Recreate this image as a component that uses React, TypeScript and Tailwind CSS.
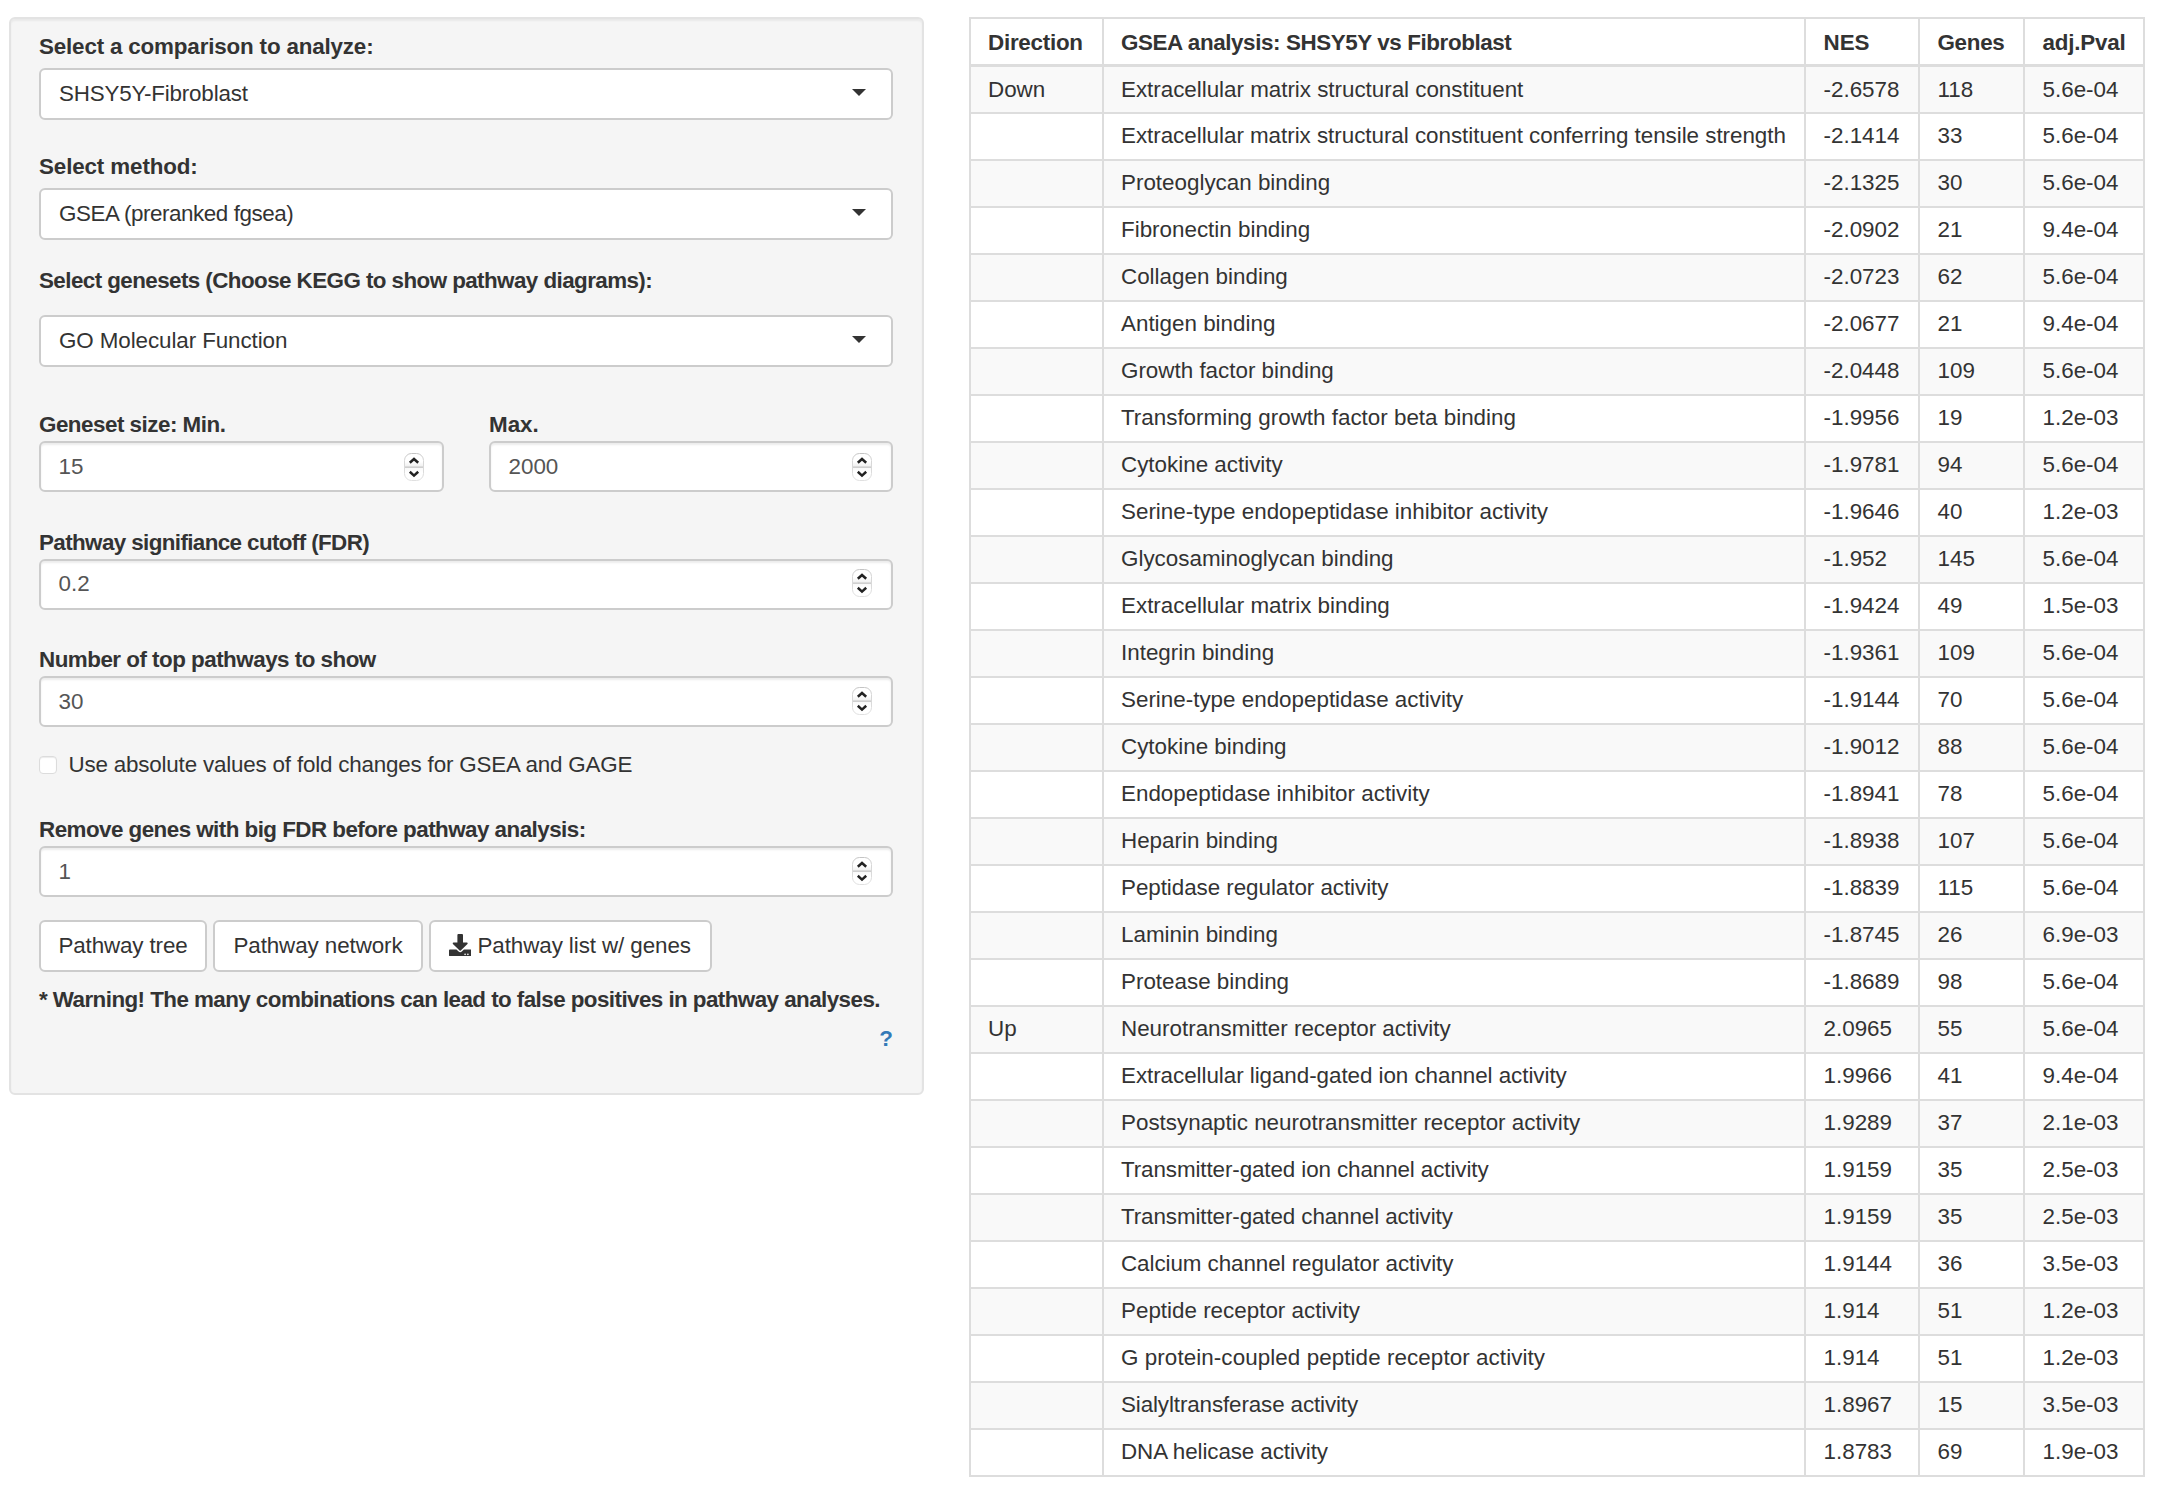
import type { ReactNode } from "react";
import { FaDownload } from "react-icons/fa";

type Row = [direction: string, pathway: string, nes: string, genes: string, pval: string, tracking?: string];

const rows: Row[] = [
  ["Down", "Extracellular matrix structural constituent", "-2.6578", "118", "5.6e-04", "tracking-[-0.02px]"],
  ["", "Extracellular matrix structural constituent conferring tensile strength", "-2.1414", "33", "5.6e-04", "tracking-[-0.03px]"],
  ["", "Proteoglycan binding", "-2.1325", "30", "5.6e-04"],
  ["", "Fibronectin binding", "-2.0902", "21", "9.4e-04"],
  ["", "Collagen binding", "-2.0723", "62", "5.6e-04"],
  ["", "Antigen binding", "-2.0677", "21", "9.4e-04"],
  ["", "Growth factor binding", "-2.0448", "109", "5.6e-04"],
  ["", "Transforming growth factor beta binding", "-1.9956", "19", "1.2e-03"],
  ["", "Cytokine activity", "-1.9781", "94", "5.6e-04"],
  ["", "Serine-type endopeptidase inhibitor activity", "-1.9646", "40", "1.2e-03"],
  ["", "Glycosaminoglycan binding", "-1.952", "145", "5.6e-04"],
  ["", "Extracellular matrix binding", "-1.9424", "49", "1.5e-03"],
  ["", "Integrin binding", "-1.9361", "109", "5.6e-04"],
  ["", "Serine-type endopeptidase activity", "-1.9144", "70", "5.6e-04"],
  ["", "Cytokine binding", "-1.9012", "88", "5.6e-04"],
  ["", "Endopeptidase inhibitor activity", "-1.8941", "78", "5.6e-04"],
  ["", "Heparin binding", "-1.8938", "107", "5.6e-04"],
  ["", "Peptidase regulator activity", "-1.8839", "115", "5.6e-04", "tracking-[-0.05px]"],
  ["", "Laminin binding", "-1.8745", "26", "6.9e-03"],
  ["", "Protease binding", "-1.8689", "98", "5.6e-04"],
  ["Up", "Neurotransmitter receptor activity", "2.0965", "55", "5.6e-04"],
  ["", "Extracellular ligand-gated ion channel activity", "1.9966", "41", "9.4e-04", "tracking-[-0.05px]"],
  ["", "Postsynaptic neurotransmitter receptor activity", "1.9289", "37", "2.1e-03"],
  ["", "Transmitter-gated ion channel activity", "1.9159", "35", "2.5e-03", "tracking-[-0.1px]"],
  ["", "Transmitter-gated channel activity", "1.9159", "35", "2.5e-03", "tracking-[-0.1px]"],
  ["", "Calcium channel regulator activity", "1.9144", "36", "3.5e-03", "tracking-[-0.07px]"],
  ["", "Peptide receptor activity", "1.914", "51", "1.2e-03"],
  ["", "G protein-coupled peptide receptor activity", "1.914", "51", "1.2e-03", "tracking-[0.08px]"],
  ["", "Sialyltransferase activity", "1.8967", "15", "3.5e-03", "tracking-[-0.12px]"],
  ["", "DNA helicase activity", "1.8783", "69", "1.9e-03", "tracking-[-0.1px]"],
];

function Label({ className, children }: { className: string; children: ReactNode }) {
  return <div className={`whitespace-nowrap font-bold leading-[31px] ${className}`}>{children}</div>;
}

function Select({ className, children }: { className: string; children: ReactNode }) {
  return (
    <div className="flex h-[52px] items-start justify-between rounded-[6px] border-2 border-[#ccc] bg-white pl-[18px] pr-[25px] pt-2 leading-[31px]">
      <span className={className}>{children}</span>
      <svg className="mt-[11px]" width="14" height="7" viewBox="0 0 14 7" fill="#333">
        <path d="M0 0h14L7 7z" />
      </svg>
    </div>
  );
}

function Spinner() {
  return (
    <svg width="20" height="28" viewBox="0 0 20 28" fill="none">
      <defs>
        <linearGradient id="stepper" x1="0" y1="0" x2="0" y2="1">
          <stop offset="0" stopColor="#fff" />
          <stop offset="0.3" stopColor="#fff" />
          <stop offset="0.48" stopColor="#f0f0f0" />
          <stop offset="0.52" stopColor="#f8f8f8" />
          <stop offset="0.7" stopColor="#fff" />
        </linearGradient>
        <linearGradient id="stepperEdge" x1="0" y1="0" x2="0" y2="1">
          <stop offset="0" stopColor="#c4c4c4" />
          <stop offset="0.25" stopColor="#d6d6d6" />
          <stop offset="1" stopColor="#e0e0e0" />
        </linearGradient>
      </defs>
      <rect x="0.5" y="0.5" width="19" height="27" rx="7" fill="url(#stepper)" stroke="url(#stepperEdge)" />
      <path d="M1 14.2h18" stroke="#cfcfcf" strokeWidth="1.6" />
      <path d="M5.8 9.8L10 6l4.2 3.8M5.8 18.8l4.2 3.8 4.2-3.8" stroke="#222" strokeWidth="2.5" />
    </svg>
  );
}

function NumberField({ value, textPad = "pt-2", spinPad = "pt-[9px]" }: { value: string; textPad?: string; spinPad?: string }) {
  return (
    <div className="flex h-[51px] items-start justify-between rounded-[6px] border-2 border-[#ccc] bg-white pl-[17.5px] pr-[19px] leading-[31px] text-[#555] shadow-[inset_0_2px_2px_rgba(0,0,0,0.075)]">
      <span className={textPad}>{value}</span>
      <span className={spinPad}>
        <Spinner />
      </span>
    </div>
  );
}

function Button({ children }: { children: ReactNode }) {
  return (
    <div className="flex h-full items-start justify-center whitespace-nowrap rounded-[6px] border-2 border-[#ccc] bg-white pt-2 leading-[31px]">
      {children}
    </div>
  );
}

function HeadCell({ className, children }: { className: string; children: ReactNode }) {
  return <div className={`border-r-2 border-[#ddd] pt-px ${className}`}>{children}</div>;
}

const columns = "grid grid-cols-[133px_702px_114px_105px_120px]";

export default function App() {
  return (
    <div className="flex h-[1508px] w-[2176px] items-start overflow-hidden bg-white pl-[9px] pt-[17px] font-['Liberation_Sans',Arial,sans-serif] text-[22.4px] text-[#333]">
      <form className="h-[1078px] w-[915px] shrink-0 rounded-[6px] border-2 border-[#e3e3e3] bg-[#f5f5f5] pl-7 pr-[29px] pt-3 shadow-[inset_0_2px_2px_rgba(0,0,0,0.05)]">
        <Label className="mb-1.5 tracking-[-0.17px]">Select a comparison to analyze:</Label>
        <Select className="tracking-[-0.2px]">SHSY5Y-Fibroblast</Select>
        <Label className="mb-1.5 mt-[31px] tracking-[-0.13px]">Select method:</Label>
        <Select className="tracking-[-0.44px]">GSEA (preranked fgsea)</Select>
        <Label className="mb-[19px] mt-[25px] tracking-[-0.57px]">Select genesets (Choose KEGG to show pathway diagrams):</Label>
        <Select className="tracking-[-0.09px]">GO Molecular Function</Select>

        <div className="mt-[42px] grid grid-cols-[405px_404px] gap-x-[45px]">
          <div>
            <Label className="mb-px tracking-[-0.5px]">Geneset size: Min.</Label>
            <NumberField value="15" spinPad="-mr-px pt-[10px]" />
          </div>
          <div>
            <Label className="mb-px">Max.</Label>
            <NumberField value="2000" spinPad="pt-[10px]" />
          </div>
        </div>

        <Label className="mb-px mt-[35px] tracking-[-0.61px]">Pathway signifiance cutoff (FDR)</Label>
        <NumberField value="0.2" textPad="pt-[7px]" spinPad="pt-2" />
        <Label className="mb-px mt-[34px] tracking-[-0.51px]">Number of top pathways to show</Label>
        <NumberField value="30" />

        <div className="mt-[22px] flex items-start leading-[31px]">
          <span className="mt-[7px] size-[18px] rounded-[4px] border border-[#dcdcdc] bg-white shadow-[inset_0_1px_1px_rgba(0,0,0,0.08)]" />
          <span className="ml-[11.5px] tracking-[-0.19px]">Use absolute values of fold changes for GSEA and GAGE</span>
        </div>

        <Label className="mb-px mt-[34px] tracking-[-0.54px]">Remove genes with big FDR before pathway analysis:</Label>
        <NumberField value="1" />

        <div className="mt-[23px] grid h-[52px] grid-cols-[168px_210px_283px] gap-x-1.5">
          <Button>
            <span className="tracking-[-0.13px]">Pathway tree</span>
          </Button>
          <Button>
            <span className="tracking-[-0.09px]">Pathway network</span>
          </Button>
          <Button>
            <FaDownload className="-ml-px mr-1.5 mt-[4px] size-[22.4px]" />
            <span className="tracking-[-0.09px]">Pathway list w/ genes</span>
          </Button>
        </div>
        <Label className="mt-3 tracking-[-0.56px]">* Warning! The many combinations can lead to false positives in pathway analyses.</Label>
        <div className="mt-2 text-right font-bold leading-[31px] text-[#337ab7]">?</div>
      </form>

      <div className="ml-[45px] w-[1176px] shrink-0 border-l-2 border-t-2 border-[#ddd]">
        <div className={`${columns} h-[48px] whitespace-nowrap border-b-[3px] border-[#ddd] font-bold leading-[45px]`}>
          <HeadCell className="pl-[17px] tracking-[-0.25px]">Direction</HeadCell>
          <HeadCell className="pl-[17px] tracking-[-0.4px]">GSEA analysis: SHSY5Y vs Fibroblast</HeadCell>
          <HeadCell className="pl-[17.5px]">NES</HeadCell>
          <HeadCell className="pl-[17.5px] tracking-[-0.3px]">Genes</HeadCell>
          <HeadCell className="pl-[17.5px] tracking-[-0.2px]">adj.Pval</HeadCell>
        </div>
        {rows.map(([direction, pathway, nes, genes, pval, tracking = ""], i) => (
          <div
            key={pathway}
            className={`${columns} h-[47px] whitespace-nowrap border-b-2 border-[#ddd] ${i === 0 ? "leading-[45px]" : "leading-[43px]"} ${i % 2 === 0 ? "bg-[#f9f9f9]" : "bg-white"}`}
          >
            <div className="border-r-2 border-[#ddd] pl-[17px]">{direction}</div>
            <div className={`border-r-2 border-[#ddd] pl-[17px] ${tracking}`}>{pathway}</div>
            <div className="border-r-2 border-[#ddd] pl-[17.5px]">{nes}</div>
            <div className="border-r-2 border-[#ddd] pl-[17.5px]">{genes}</div>
            <div className="border-r-2 border-[#ddd] pl-[17.5px]">{pval}</div>
          </div>
        ))}
      </div>
    </div>
  );
}
